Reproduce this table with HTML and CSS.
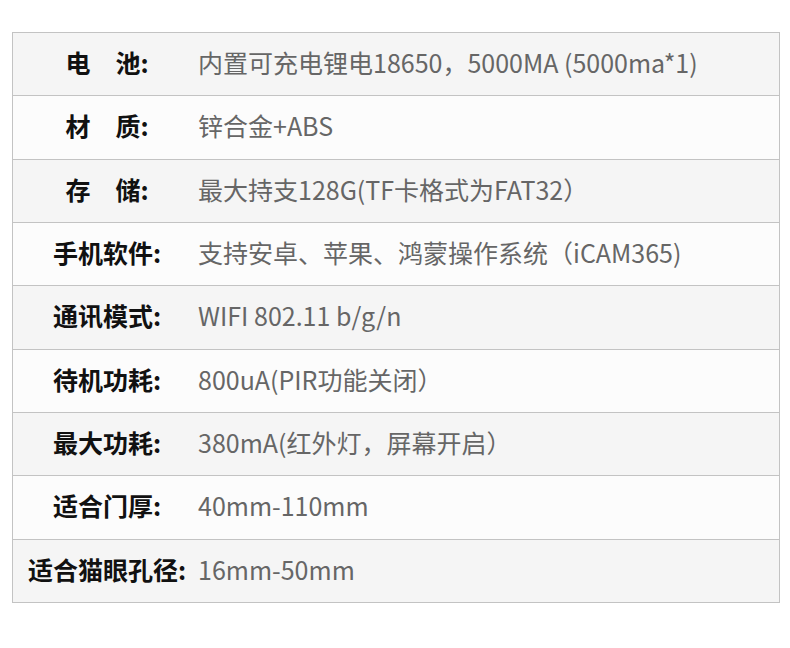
FILE: index.html
```html
<!DOCTYPE html>
<html lang="zh">
<head>
<meta charset="utf-8">
<link rel="stylesheet" href="styles.css">
</head>
<body>
<div class="spec">
  <div class="row odd"><div class="label">电&emsp;池:</div><div class="value">内置可充电锂电18650，5000MA (5000ma*1)</div></div>
  <div class="row"><div class="label">材&emsp;质:</div><div class="value">锌合金+ABS</div></div>
  <div class="row odd"><div class="label">存&emsp;储:</div><div class="value">最大持支128G(TF卡格式为FAT32）</div></div>
  <div class="row"><div class="label">手机软件:</div><div class="value">支持安卓、苹果、鸿蒙操作系统（iCAM365)</div></div>
  <div class="row odd"><div class="label">通讯模式:</div><div class="value">WIFI 802.11 b/g/n</div></div>
  <div class="row"><div class="label">待机功耗:</div><div class="value">800uA(PIR功能关闭）</div></div>
  <div class="row odd"><div class="label">最大功耗:</div><div class="value">380mA(红外灯，屏幕开启）</div></div>
  <div class="row"><div class="label">适合门厚:</div><div class="value">40mm-110mm</div></div>
  <div class="row odd last"><div class="label">适合猫眼孔径:</div><div class="value">16mm-50mm</div></div>
</div>
</body>
</html>
```
FILE: styles.css
```css
html, body {
  margin: 0;
  padding: 0;
  background: #ffffff;
}
body {
  padding: 32px 10px 0 12px;
  font-family: "Noto Sans CJK SC", "Noto Sans", sans-serif;
}
.spec {
  width: 766px;
  border: 1px solid #c3c3c3;
  display: flex;
  flex-direction: column;
}
.row {
  display: flex;
  align-items: center;
  box-sizing: border-box;
  height: 63.33px;
  padding-bottom: 4px;
  border-bottom: 1px solid #c3c3c3;
  background: #fcfcfc;
}
.row.odd {
  background: #f5f5f5;
}
.row.last {
  border-bottom: none;
  height: 62.33px;
}
.label {
  width: 180px;
  padding-left: 4px;
  text-align: center;
  font-size: 25px;
  font-weight: 700;
  color: #111111;
  white-space: nowrap;
}
.value {
  padding-left: 1px;
  font-size: 25px;
  color: #666666;
  white-space: nowrap;
}
```
